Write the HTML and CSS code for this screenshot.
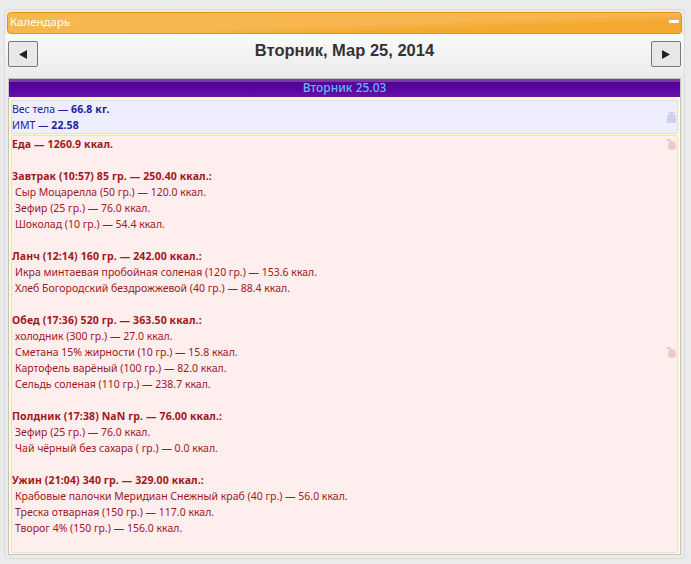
FILE: index.html
```html
<!DOCTYPE html>
<html lang="ru">
<head>
<meta charset="utf-8">
<title>Календарь</title>
<link rel="stylesheet" href="styles.css">
</head>
<body>
<main class="panel">
  <header class="panel-head">
    <span class="panel-title">Календарь</span>
    <span class="collapse"></span>
  </header>
  <div class="toolbar">
    <button class="nav-btn" type="button"><svg width="8" height="9" viewBox="0 0 8 9"><path d="M0 4.5 8 0v9z" fill="#222"/></svg></button>
    <h1 class="date">Вторник, Мар 25, 2014</h1>
    <button class="nav-btn" type="button"><svg width="8" height="9" viewBox="0 0 8 9"><path d="M0 0l8 4.5L0 9z" fill="#222"/></svg></button>
  </div>
  <section class="day">
    <h2 class="day-title">Вторник 25.03</h2>
    <div class="day-body">
      <div class="box box-body">
        <div class="line">Вес тела — <b>66.8 кг.</b></div>
        <div class="line">ИМТ — <b>22.58</b></div>
        <svg class="icon icon-top" width="9" height="11" viewBox="0 0 9 11"><path d="M1 0h7v1H6v1h1l2 2v7H0V4l2-2h1V1H1z" fill="#cdcfec"/></svg>
      </div>
      <div class="box box-food">
        <svg class="icon icon-top" width="10" height="11" viewBox="0 0 10 11"><path d="M0 0h4l2 2h2l2 3v4L8 11H4L2 9V5l1-2V2H1z" fill="#efcaca"/></svg>
        <svg class="icon icon-mid" width="10" height="11" viewBox="0 0 10 11"><path d="M0 0h4l2 2h2l2 3v4L8 11H4L2 9V5l1-2V2H1z" fill="#efcaca"/></svg>
        <div class="line"><b>Еда — 1260.9 ккал.</b></div>
        <div class="line gap"></div>
        <div class="line"><b>Завтрак (10:57) 85 гр. — 250.40 ккал.:</b></div>
        <div class="line item">Сыр Моцарелла (50 гр.) — 120.0 ккал.</div>
        <div class="line item">Зефир (25 гр.) — 76.0 ккал.</div>
        <div class="line item">Шоколад (10 гр.) — 54.4 ккал.</div>
        <div class="line gap"></div>
        <div class="line"><b>Ланч (12:14) 160 гр. — 242.00 ккал.:</b></div>
        <div class="line item">Икра минтаевая пробойная соленая (120 гр.) — 153.6 ккал.</div>
        <div class="line item">Хлеб Богородский бездрожжевой (40 гр.) — 88.4 ккал.</div>
        <div class="line gap"></div>
        <div class="line"><b>Обед (17:36) 520 гр. — 363.50 ккал.:</b></div>
        <div class="line item">холодник (300 гр.) — 27.0 ккал.</div>
        <div class="line item">Сметана 15% жирности (10 гр.) — 15.8 ккал.</div>
        <div class="line item">Картофель варёный (100 гр.) — 82.0 ккал.</div>
        <div class="line item">Сельдь соленая (110 гр.) — 238.7 ккал.</div>
        <div class="line gap"></div>
        <div class="line"><b>Полдник (17:38) NaN гр. — 76.00 ккал.:</b></div>
        <div class="line item">Зефир (25 гр.) — 76.0 ккал.</div>
        <div class="line item">Чай чёрный без сахара ( гр.) — 0.0 ккал.</div>
        <div class="line gap"></div>
        <div class="line"><b>Ужин (21:04) 340 гр. — 329.00 ккал.:</b></div>
        <div class="line item">Крабовые палочки Меридиан Снежный краб (40 гр.) — 56.0 ккал.</div>
        <div class="line item">Треска отварная (150 гр.) — 117.0 ккал.</div>
        <div class="line item">Творог 4% (150 гр.) — 156.0 ккал.</div>
      </div>
    </div>
  </section>
</main>
</body>
</html>
```
FILE: styles.css
```css
html, body {
  margin: 0;
  padding: 0;
  height: 564px;
  overflow: hidden;
  background: #ebebeb;
}
body {
  padding: 9px 6px 5px 4px;
  box-sizing: border-box;
  font-family: "Noto Sans", sans-serif;
  font-size: 10.5px;
}
b {
  letter-spacing: 0.12px;
}
.panel {
  height: 550px;
  box-sizing: border-box;
  background: #ebebeb;
  border: 1px solid #dcdcdc;
  border-radius: 4px;
  padding: 2px;
  display: flex;
  flex-direction: column;
}
.panel-head {
  height: 22px;
  flex: none;
  box-sizing: border-box;
  display: flex;
  align-items: center;
  justify-content: space-between;
  padding: 0 2px 3px;
  border: 1px solid #e8920f;
  border-radius: 4px;
  background: linear-gradient(178deg, #f8b850 0, #f7b650 55%, #f5a830 72%, #f5a930 100%);
  color: #fff;
  font-size: 11.5px;
}
.collapse {
  width: 10px;
  height: 3px;
  background: #fff;
}
.toolbar {
  height: 44px;
  flex: none;
  box-sizing: border-box;
  margin: 0 -2px;
  padding: 7px 3px 0;
  display: flex;
  justify-content: space-between;
  align-items: flex-start;
  background: linear-gradient(#fafafa, #ebebeb);
}
.nav-btn {
  width: 30px;
  height: 26px;
  padding: 0;
  border: 1px solid #777;
  border-radius: 2px;
  background: #e8e8e8;
  display: flex;
  align-items: center;
  justify-content: center;
}
.date {
  margin: 0;
  font-family: "Liberation Sans", sans-serif;
  font-size: 16.5px;
  line-height: 18px;
  font-weight: 700;
  color: #333;
}
.day {
  flex: 1;
  margin: 0 1px 1px;
  display: flex;
  flex-direction: column;
  border: 1px solid #c4c4c4;
  background: #fffdc8;
}
.day-title {
  margin: 0;
  height: 18px;
  flex: none;
  text-align: center;
  font-size: 12px;
  font-weight: 500;
  line-height: 17px;
  color: #60b8ff;
  background: linear-gradient(#7a3ca8 0, #7a3ca8 3px, #530098 3px, #5a08a0 12px, #6a14a8 100%);
}
.day-body {
  flex: 1;
  padding: 3px 2px 1px;
  display: flex;
  flex-direction: column;
  gap: 1px;
}
.box {
  position: relative;
  box-sizing: border-box;
  border-radius: 2px;
}
.box-body {
  height: 34px;
  flex: none;
  background: #eeeefe;
  border: 1px solid #dddcec;
  color: #2020a0;
}
.box-food {
  flex: 1;
  background: #feeeee;
  border: 1px solid #ecdcd8;
  color: #a01820;
}
.line {
  height: 16px;
  line-height: 16px;
  white-space: nowrap;
}
.item {
  padding-left: 3px;
}
.icon {
  position: absolute;
  right: 1px;
}
.icon-top {
  top: 11px;
}
.box-food .icon-top {
  top: 3px;
}
.icon-mid {
  top: 211px;
}
```
